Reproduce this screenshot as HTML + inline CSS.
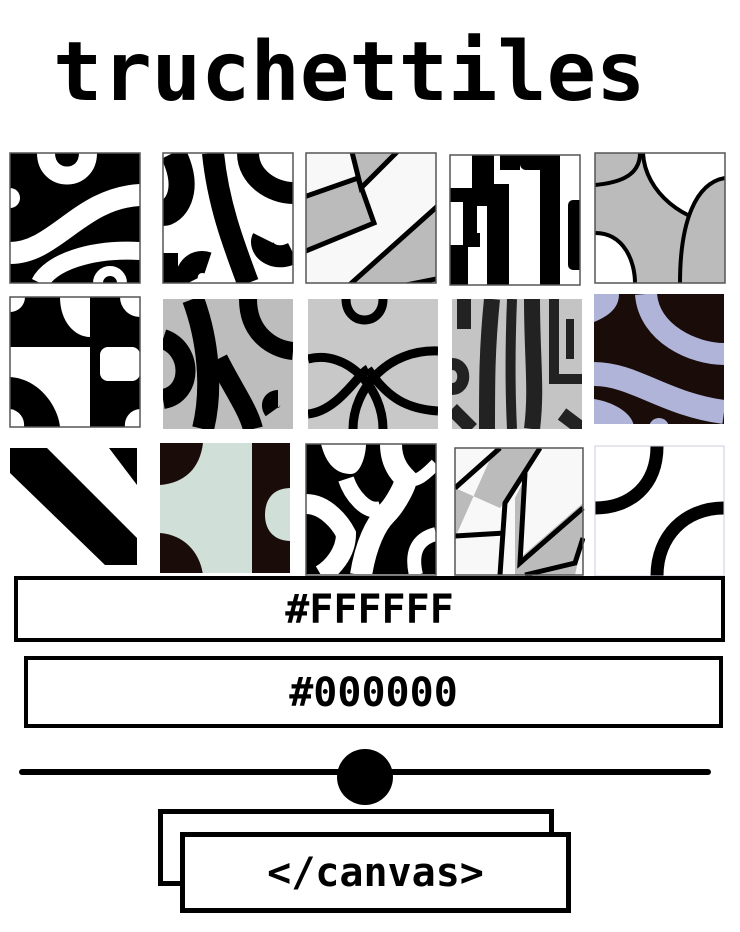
<!DOCTYPE html>
<html><head><meta charset="utf-8"><style>
html,body{margin:0;padding:0;background:#fff;}
body{width:740px;height:932px;position:relative;overflow:hidden;font-family:"DejaVu Sans Mono","Liberation Mono",monospace;}
.t{position:absolute;left:53px;top:18px;font-size:82px;font-weight:bold;line-height:110px;color:#000;}
.box{position:absolute;border:4px solid #000;background:#fff;box-sizing:border-box;text-align:center;font-weight:bold;font-size:40px;color:#000;}
</style></head><body>
<div class="t">truchettiles</div>
<svg width="740" height="932" style="position:absolute;left:0;top:0" xmlns="http://www.w3.org/2000/svg">
<defs>
<clipPath id="c"><rect x="0" y="0" width="130" height="130"/></clipPath>
</defs>
<g transform="translate(10,153)"><g clip-path="url(#c)">
<rect width="130" height="130" fill="#000"/>
<path d="M36,0 C36,30 78,30 78,0" stroke="#fff" stroke-width="18" fill="none"/>
<circle cx="0" cy="45" r="10" fill="#fff"/>
<path d="M0,100 C45,100 70,45 130,42" stroke="#fff" stroke-width="22" fill="none"/>
<path d="M30,130 C40,110 80,95 130,98" stroke="#fff" stroke-width="18" fill="none"/>
<path d="M88,130 A12,12 0 0 1 112,130" stroke="#fff" stroke-width="10" fill="none"/>
</g><rect width="130" height="130" fill="none" stroke="#555" stroke-width="1.5"/></g>

<g transform="translate(163,153)"><g clip-path="url(#c)">
<rect width="130" height="130" fill="#fff"/>
<path d="M10,0 C30,40 10,60 0,60" stroke="#000" stroke-width="26" fill="none"/>
<path d="M50,0 C55,50 70,90 85,130" stroke="#000" stroke-width="22" fill="none"/>
<path d="M85,0 C85,25 110,40 130,40" stroke="#000" stroke-width="22" fill="none"/>
<path d="M100,85 C95,95 110,110 130,100" stroke="#000" stroke-width="22" fill="none"/>
<path d="M45,110 C30,105 20,120 25,130" stroke="#000" stroke-width="22" fill="none"/>
<path d="M0,100 L0,130" stroke="#000" stroke-width="30"/>
</g><rect width="130" height="130" fill="none" stroke="#555" stroke-width="1.5"/></g>

<g transform="translate(306,153)"><g clip-path="url(#c)">
<rect width="130" height="130" fill="#f8f8f8"/>
<polygon points="-5,45 52,25 68,70 -5,100" fill="#bbb" stroke="#000" stroke-width="5"/>
<polygon points="45,-5 95,-5 55,35" fill="#bbb" stroke="#000" stroke-width="5"/>
<polygon points="135,50 135,125 85,135 40,135" fill="#bbb" stroke="#000" stroke-width="5"/>
</g><rect width="130" height="130" fill="none" stroke="#555" stroke-width="1.5"/></g>

<g transform="translate(450,155)"><g clip-path="url(#c)">
<rect width="130" height="130" fill="#fff"/>
<path d="M33,0 L33,40 L48,40 L48,130" stroke="#000" stroke-width="22" fill="none"/>
<rect x="50" y="0" width="20" height="15" fill="#000"/>
<rect x="70" y="-5" width="30" height="20" fill="#000" rx="6"/>
<rect x="90" y="0" width="20" height="130" fill="#000"/>
<path d="M0,40 L20,40 L20,85 L30,85" stroke="#000" stroke-width="14" fill="none"/>
<rect x="0" y="90" width="18" height="40" fill="#000"/>
<rect x="118" y="45" width="20" height="70" rx="5" fill="#000"/>
</g><rect width="130" height="130" fill="none" stroke="#555" stroke-width="1.5"/></g>

<g transform="translate(595,153)"><g clip-path="url(#c)">
<rect width="130" height="130" fill="#bbb"/>
<path d="M48,0 C50,40 90,70 130,72 L130,0 Z" fill="#fff"/>
<path d="M48,0 C50,40 90,70 130,72" stroke="#000" stroke-width="4" fill="none"/>
<path d="M45,-2 C45,25 25,30 0,35 L0,-2 Z" fill="#bbb"/>
<path d="M45,0 C45,25 20,30 0,32" stroke="#000" stroke-width="4" fill="none"/>
<path d="M130,25 C100,30 85,70 85,130 L130,130 Z" fill="#bbb"/>
<path d="M130,25 C100,30 85,70 85,130" stroke="#000" stroke-width="4" fill="none"/>
<path d="M0,80 C30,80 40,110 40,130 L0,130 Z" fill="#fff"/>
<path d="M0,80 C30,80 40,110 40,130" stroke="#000" stroke-width="4" fill="none"/>
</g><rect width="130" height="130" fill="none" stroke="#555" stroke-width="1.5"/></g>

<g transform="translate(10,297)"><g clip-path="url(#c)">
<rect width="130" height="130" fill="#000"/>
<rect x="0" y="50" width="80" height="80" fill="#fff"/>
<path d="M0,80 C30,82 48,110 50,130 L0,130 Z" fill="#000"/>
<rect x="80" y="50" width="50" height="80" fill="#000"/>
<rect x="90" y="50" width="40" height="34" rx="8" fill="#fff"/>
<path d="M50,0 C50,25 65,40 80,40 L80,0 Z" fill="#fff"/>
<path d="M110,0 A20,20 0 0 0 130,20 L130,0 Z" fill="#fff"/>
<path d="M0,0 L15,0 A15,15 0 0 1 0,15 Z" fill="#fff"/>
<path d="M0,112 A16,16 0 0 1 14,130 L0,130Z" fill="#fff"/>
<path d="M115,130 A16,16 0 0 1 130,112 L130,130Z" fill="#fff"/>
</g><rect width="130" height="130" fill="none" stroke="#555" stroke-width="1.5"/></g>

<g transform="translate(163,299)"><g clip-path="url(#c)">
<rect width="130" height="130" fill="#bdbdbd"/>
<path d="M0,40 C30,50 30,95 0,100" stroke="#000" stroke-width="20" fill="none"/>
<path d="M30,0 C45,40 50,90 40,130" stroke="#000" stroke-width="22" fill="none"/>
<path d="M55,60 C70,90 85,110 90,130" stroke="#000" stroke-width="20" fill="none"/>
<path d="M85,0 C85,35 110,50 130,52" stroke="#000" stroke-width="18" fill="none"/>
<path d="M115,100 C110,100 105,105 110,112" stroke="#000" stroke-width="18" fill="none"/>
</g></g>

<g transform="translate(308,299)"><g clip-path="url(#c)">
<rect width="130" height="130" fill="#c8c8c8"/>
<path d="M38,0 C38,28 75,28 75,0" stroke="#000" stroke-width="9" fill="none"/>
<path d="M0,60 C40,50 75,90 75,130" stroke="#000" stroke-width="9" fill="none"/>
<path d="M130,52 C80,50 45,90 45,130" stroke="#000" stroke-width="9" fill="none"/>
<path d="M0,115 C30,112 50,75 60,70" stroke="#000" stroke-width="9" fill="none"/>
<path d="M130,112 C100,110 80,100 60,70" stroke="#000" stroke-width="9" fill="none"/>
</g></g>

<g transform="translate(452,299)"><g clip-path="url(#c)">
<rect width="130" height="130" fill="#c4c4c4"/>
<path d="M12,0 L12,30" stroke="#222" stroke-width="14"/>
<path d="M0,65 C15,65 15,90 0,90" stroke="#222" stroke-width="12" fill="none"/>
<path d="M40,0 C35,50 35,80 35,130" stroke="#222" stroke-width="16" fill="none"/>
<path d="M60,0 C58,50 58,90 60,130" stroke="#222" stroke-width="10" fill="none"/>
<path d="M80,0 C80,60 85,90 80,130" stroke="#222" stroke-width="16" fill="none"/>
<path d="M102,0 L102,80 L130,80" stroke="#222" stroke-width="10" fill="none"/>
<path d="M118,20 L118,60" stroke="#222" stroke-width="8"/>
<path d="M0,110 L20,130" stroke="#222" stroke-width="14"/>
<path d="M110,115 L130,130" stroke="#222" stroke-width="14"/>
</g></g>

<g transform="translate(594,294)"><g clip-path="url(#c)">
<rect width="130" height="134" fill="#1a0c08"/>
<path d="M0,28 C20,20 25,10 25,0 L0,0 Z" fill="#b0b4d8"/>
<path d="M52,0 C55,40 100,60 130,60" stroke="#b0b4d8" stroke-width="22" fill="none"/>
<path d="M0,80 C40,80 70,110 130,118" stroke="#b0b4d8" stroke-width="24" fill="none"/>
<path d="M0,100 L0,134 L40,134 C40,120 20,108 0,105 Z" fill="#b0b4d8"/>
<circle cx="65" cy="134" r="10" fill="#b0b4d8"/>
</g></g>

<g transform="translate(10,448)"><g clip-path="url(#c)">
<rect width="127" height="117" fill="#fff"/>
<polygon points="0,0 37,0 127,90 127,117 95,117 0,25" fill="#000"/>
<polygon points="99,0 127,0 127,37" fill="#000"/>
</g></g>

<g transform="translate(160,443)"><g clip-path="url(#c)">
<rect width="131" height="132" fill="#d0e0d8"/>
<path d="M0,0 L43,0 C40,25 25,40 0,42 Z" fill="#1a0c08"/>
<path d="M0,90 C25,92 40,110 43,132 L0,132 Z" fill="#1a0c08"/>
<rect x="92" y="0" width="39" height="132" fill="#1a0c08"/>
<path d="M131,45 C110,45 105,60 105,72 C105,85 112,98 131,98 Z" fill="#d0e0d8"/>
</g></g>

<g transform="translate(306,444)"><g clip-path="url(#c)">
<rect width="130" height="131" fill="#000"/>
<path d="M15,0 C20,20 30,30 45,30 C55,30 60,10 60,0 Z" fill="#fff"/>
<path d="M85,0 C85,20 95,30 100,35 C100,40 90,60 80,70 C70,80 60,100 55,131" stroke="#fff" stroke-width="22" fill="none"/>
<path d="M0,60 C20,60 35,80 40,90 C40,110 25,125 15,131" stroke="#fff" stroke-width="20" fill="none"/>
<path d="M40,35 C45,50 60,70 75,65" stroke="#fff" stroke-width="16" fill="none"/>
<path d="M100,35 C110,40 120,30 130,20" stroke="#fff" stroke-width="12" fill="none"/>
<path d="M130,90 C110,95 105,110 110,131" stroke="#fff" stroke-width="14" fill="none"/>
</g><rect width="130" height="131" fill="none" stroke="#555" stroke-width="1.5"/></g>

<g transform="translate(455,448)"><g clip-path="url(#c)">
<rect width="128" height="127" fill="#f8f8f8"/>
<polygon points="0,90 40,0 85,0 60,50 60,127 120,127 128,90 128,55 65,110 70,30 45,60 0,40" fill="#bbb"/>
<polyline points="0,40 45,0" stroke="#000" stroke-width="5" fill="none"/>
<polyline points="85,0 50,55 45,127" stroke="#000" stroke-width="5" fill="none"/>
<polyline points="70,25 65,115 128,60" stroke="#000" stroke-width="5" fill="none"/>
<polyline points="0,88 50,85" stroke="#000" stroke-width="5" fill="none"/>
<polyline points="70,127 120,115 128,90" stroke="#000" stroke-width="5" fill="none"/>
</g><rect width="128" height="127" fill="none" stroke="#555" stroke-width="1.5"/></g>

<g transform="translate(595,446)"><g clip-path="url(#c)">
<rect width="129" height="130" fill="#fff"/>
<path d="M62,0 C62,40 35,62 0,62" stroke="#000" stroke-width="13" fill="none"/>
<path d="M129,62 C90,62 62,90 62,130" stroke="#000" stroke-width="13" fill="none"/>
</g><rect width="129" height="130" fill="none" stroke="#ccd" stroke-width="1"/></g>

<line x1="22" y1="772" x2="708" y2="772" stroke="#000" stroke-width="6" stroke-linecap="round"/>
<circle cx="365" cy="777" r="28" fill="#000"/>
</svg>
<div class="box" style="left:14px;top:576px;width:711px;height:66px;line-height:60px;">#FFFFFF</div>
<div class="box" style="left:24px;top:656px;width:699px;height:72px;line-height:66px;">#000000</div>
<div class="box" style="left:158px;top:809px;width:396px;height:77px;border-width:5px;"></div>
<div class="box" style="left:180px;top:832px;width:391px;height:81px;border-width:5px;line-height:72px;font-size:40px;">&lt;/canvas&gt;</div>
</body></html>
